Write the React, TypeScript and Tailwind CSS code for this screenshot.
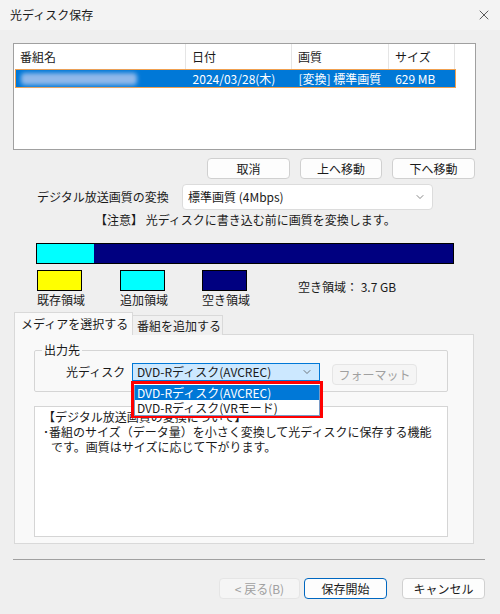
import { ChevronDown, X } from 'lucide-react';

const font = { fontFamily: '"Noto Sans CJK JP", "Noto Sans", sans-serif' };

function Button({ label, className = '', disabled = false, primary = false }: { label: string; className?: string; disabled?: boolean; primary?: boolean }) {
  return (
    <button
      disabled={disabled}
      className={`flex items-center justify-center rounded-[4px] border text-[12px] leading-none ${
        disabled
          ? 'bg-[#f5f5f5] border-[#e5e5e5] text-[#a0a0a0]'
          : primary
          ? 'bg-[#fdfdfd] border-[#0067c0] text-[#1a1a1a]'
          : 'bg-[#fdfdfd] border-[#d0d0d0] text-[#1a1a1a]'
      } ${className}`}
    >
      {label}
    </button>
  );
}

export default function App() {
  return (
    <div className="w-[500px] h-[614px] bg-[#efefef] text-[12px] text-[#1a1a1a] flex flex-col overflow-hidden" style={font}>
      {/* Title bar */}
      <div className="h-[30px] bg-[#f3f3f3] flex items-center justify-between pl-[10px] pr-[8px]">
        <span className="text-[12px]">光ディスク保存</span>
        <X className="w-[16px] h-[16px] text-[#333]" strokeWidth={1.2} />
      </div>

      {/* Program list */}
      <div className="mt-[13px] ml-[13px] w-[463px] h-[107px] bg-white border border-[#a0a0a0]">
        <div className="flex h-[25px] items-center">
          <div className="w-[172px] h-full pl-[6px] flex items-center border-r border-[#e5e5e5]">番組名</div>
          <div className="w-[106px] h-full pl-[6px] flex items-center border-r border-[#e5e5e5]">日付</div>
          <div className="w-[97px] h-full pl-[6px] flex items-center border-r border-[#e5e5e5]">画質</div>
          <div className="w-[66px] h-full pl-[6px] flex items-center border-r border-[#e5e5e5]">サイズ</div>
        </div>
        <div className="flex h-[19px] w-[441px] ml-px items-center bg-[#0078d7] border border-[#f0a050] text-white">
          <div className="w-[171px] pl-[5px] flex items-center">
            <span className="block w-[116px] h-[12px] bg-[#8fb8ea] blur-[2px] rounded-sm" />
          </div>
          <div className="w-[106px] pl-[6px]">2024/03/28(木)</div>
          <div className="w-[97px] pl-[6px]">[変換] 標準画質</div>
          <div className="w-[66px] pl-[6px]">629 MB</div>
        </div>
      </div>

      {/* Order buttons */}
      <div className="mt-[8px] ml-[207px] flex gap-[10px]">
        <Button label="取消" className="w-[83px] h-[21px]" />
        <Button label="上へ移動" className="w-[82px] h-[21px]" />
        <Button label="下へ移動" className="w-[83px] h-[21px]" />
      </div>

      {/* Conversion */}
      <div className="mt-[5px] flex items-center">
        <div className="ml-[37px] w-[145px]">デジタル放送画質の変換</div>
        <div className="w-[251px] h-[26px] bg-white border border-[#dcdcdc] rounded-[4px] flex items-center justify-between pl-[5px] pr-[6px]">
          <span>標準画質 (4Mbps)</span>
          <ChevronDown className="w-[12px] h-[12px] text-[#606060]" strokeWidth={1.5} />
        </div>
      </div>
      <div className="mt-[2px] ml-[95px] h-[16px] leading-[16px]">【注意】 光ディスクに書き込む前に画質を変換します。</div>

      {/* Capacity bar */}
      <div className="mt-[15px] ml-[36px] w-[418px] h-[21px] border border-black flex bg-[#000080]">
        <div className="w-[58px] h-full bg-[#00ffff] border-r border-[#000080]" />
      </div>

      {/* Legend */}
      <div className="mt-[6px] ml-[37px] flex">
        <div className="w-[83px]">
          <div className="w-[45px] h-[21px] bg-[#ffff00] border border-black" />
          <div className="mt-[1px] leading-[16px]">既存領域</div>
        </div>
        <div className="w-[82px]">
          <div className="w-[45px] h-[21px] bg-[#00ffff] border border-black" />
          <div className="mt-[1px] leading-[16px]">追加領域</div>
        </div>
        <div className="w-[96px]">
          <div className="w-[45px] h-[21px] bg-[#000080] border border-black" />
          <div className="mt-[1px] leading-[16px]">空き領域</div>
        </div>
        <div className="mt-[9px] leading-[16px]">空き領域： 3.7 GB</div>
      </div>

      {/* Tabs */}
      <div className="mt-[4px] ml-[14px] w-[460px]">
        <div className="flex items-end h-[23px]">
          <div className="w-[119px] h-[23px] bg-[#f9f9f9] border border-b-0 border-[#d9d9d9] flex items-center pl-[6px] relative z-10">
            メディアを選択する
          </div>
          <div className="w-[90px] h-[20px] bg-[#f0f0f0] border border-l-0 border-b-0 border-[#d9d9d9] flex items-center pl-[4px]">
            番組を追加する
          </div>
        </div>
        <div className="h-[210px] -mt-px bg-[#f9f9f9] border border-[#d9d9d9] pl-[19px] pt-[7px]">
          <fieldset className="w-[414px] h-[50px] border border-[#d5d5d5] rounded-[2px] relative z-20 m-0 p-0">
            <legend className="ml-[7px] px-[2px] leading-[16px]">出力先</legend>
            <div className="flex items-start pl-[31px] pt-[5px]">
              <div className="w-[66px] h-[18px] flex items-center">光ディスク</div>
              <div className="relative">
                <div className="w-[188px] h-[18px] bg-[#cce8ff] border border-[#0078d7] flex items-center justify-between pl-[4px] pr-[6px]">
                  <span>DVD-Rディスク(AVCREC)</span>
                  <ChevronDown className="w-[12px] h-[12px] text-[#505050]" strokeWidth={1.5} />
                </div>
                <div className="absolute top-[18px] -left-[1px] w-[192px] h-[37px] border-[3px] border-[#ff0000] bg-white">
                  <div className="h-full border border-[#7a9cc6] border-t-0 bg-white">
                    <div className="h-[15px] mt-px bg-[#0078d7] text-white flex items-center pl-[2px]">DVD-Rディスク(AVCREC)</div>
                    <div className="h-[15px] flex items-center pl-[2px]">DVD-Rディスク(VRモード)</div>
                  </div>
                </div>
              </div>
              <Button label="フォーマット" disabled className="ml-[12px] mt-px w-[85px] h-[21px]" />
            </div>
          </fieldset>
          <div className="mt-[14px] w-[414px] h-[131px] bg-white border border-[#d5d5d5] pt-[2px] pl-[8px] leading-[15px]">
            <div>【デジタル放送画質の変換について】</div>
            <div>･番組のサイズ（データ量）を小さく変換して光ディスクに保存する機能</div>
            <div className="pl-[8px]">です。画質はサイズに応じて下がります。</div>
          </div>
        </div>
      </div>

      {/* Separator */}
      <div className="mt-[15px] ml-[13px] w-[472px] h-px bg-[#a0a0a0]" />

      {/* Bottom buttons */}
      <div className="mt-[18px] ml-[219px] flex">
        <Button label="< 戻る(B)" disabled className="w-[81px] h-[21px]" />
        <Button label="保存開始" primary className="ml-[4px] w-[83px] h-[21px]" />
        <Button label="キャンセル" className="ml-[15px] w-[83px] h-[21px]" />
      </div>
    </div>
  );
}
